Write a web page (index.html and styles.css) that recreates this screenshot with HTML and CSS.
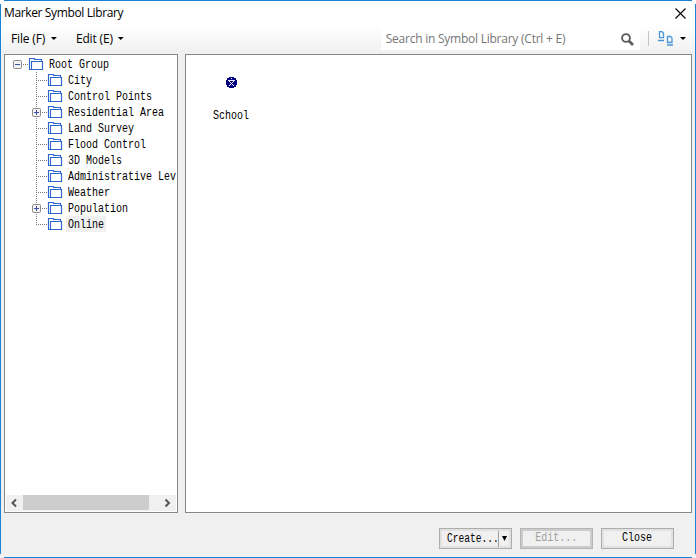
FILE: index.html
```html
<!DOCTYPE html>
<html lang="en">
<head>
<meta charset="utf-8">
<title>Marker Symbol Library</title>
<link rel="stylesheet" href="styles.css">
</head>
<body>
<svg width="0" height="0" class="defs">
  <defs>
    <g id="folder" fill="none" stroke="#2e66d0"><path d="M.5 13.5V2.5H5.500V3.500H12.500V5.500M2.500 13.500V5.500H13.500V13.500H0" stroke-width="1.150"/></g>
    <g id="box"><rect x=".5" y="4.5" width="8" height="8" rx="1" fill="#f2f2f2" stroke="#8c8c8c"/><path d="M2 8.500h5" stroke="#3c50a0"/></g>
    <g id="line"><path d="M36.500 0v16" stroke="#777" stroke-dasharray="1 1"/><path d="M38 8.500h9" stroke="#777" stroke-dasharray="1 1"/><use href="#folder" x="48"/></g>
    <g id="plus"><use href="#line"/><rect x="32" y="4" width="9" height="9" fill="#fff"/><use href="#box" x="32"/><path d="M36.500 6v5" stroke="#3c50a0"/></g>
  </defs>
</svg>
<div class="window">
  <header class="title"><span class="title-text">Marker Symbol Library</span>
    <svg width="11" height="11" viewBox="0 0 11 11"><path d="M.5.5l10 10M10.500.5l-10 10" stroke="#000" stroke-width="1.100"/></svg>
  </header>
  <nav class="toolbar">
    <span class="menu file">File (F)</span><i class="arrow"></i>
    <span class="menu edit">Edit (E)</span><i class="arrow"></i>
    <div class="search"><span>Search in Symbol Library (Ctrl + E)</span>
      <svg width="13" height="13" viewBox="0 0 13 13" fill="none" stroke="#5c5c5c"><circle cx="5" cy="5" r="3.900" stroke-width="1.900"/><path d="M8 8l4 4" stroke-width="2.600"/></svg>
    </div>
    <i class="divider"></i>
    <svg class="view" width="16" height="15" viewBox="0 0 16 15" fill="none" stroke="#4795d8" stroke-width="1.300"><path d="M1.500.7h2.500l1.500 1.500v4.500h-4zM0 9.500h6M9.500 5.500h3l1.500 1.500v4.500h-4.500zM9 14h6"/></svg>
    <i class="arrow"></i>
  </nav>
  <main class="panels">
    <section class="tree">
      <ul>
        <li><svg width="39" height="16" viewBox="5 0 39 16"><use href="#box" x="13"/><path d="M23 8.500h5" stroke="#777" stroke-dasharray="1 1"/><use href="#folder" x="29"/></svg><span><b>Root Group</b></span></li>
        <li><svg width="58" height="16" viewBox="5 0 58 16"><use href="#line"/></svg><span><b>City</b></span></li>
        <li><svg width="58" height="16" viewBox="5 0 58 16"><use href="#line"/></svg><span><b>Control Points</b></span></li>
        <li><svg width="58" height="16" viewBox="5 0 58 16"><use href="#plus"/></svg><span><b>Residential Area</b></span></li>
        <li><svg width="58" height="16" viewBox="5 0 58 16"><use href="#line"/></svg><span><b>Land Survey</b></span></li>
        <li><svg width="58" height="16" viewBox="5 0 58 16"><use href="#line"/></svg><span><b>Flood Control</b></span></li>
        <li><svg width="58" height="16" viewBox="5 0 58 16"><use href="#line"/></svg><span><b>3D Models</b></span></li>
        <li><svg width="58" height="16" viewBox="5 0 58 16"><use href="#line"/></svg><span><b>Administrative Lev</b></span></li>
        <li><svg width="58" height="16" viewBox="5 0 58 16"><use href="#line"/></svg><span><b>Weather</b></span></li>
        <li><svg width="58" height="16" viewBox="5 0 58 16"><use href="#plus"/></svg><span><b>Population</b></span></li>
        <li><svg width="58" height="16" viewBox="5 0 58 16"><path d="M36.500 0v9" stroke="#777" stroke-dasharray="1 1"/><path d="M38 8.500h9" stroke="#777" stroke-dasharray="1 1"/><use href="#folder" x="48"/></svg><span class="selected"><b>Online</b></span></li>
      </ul>
      <div class="scroll">
        <svg width="17" height="16" viewBox="0 0 17 16"><path d="M10 4.500L6.500 8 10 11.500" fill="none" stroke="#555" stroke-width="2"/></svg>
        <i class="thumb"></i>
        <svg width="17" height="16" viewBox="0 0 17 16"><path d="M6.500 4.500L10 8 6.500 11.500" fill="none" stroke="#555" stroke-width="2"/></svg>
      </div>
    </section>
    <section class="symbols">
      <figure>
        <svg width="11" height="11" viewBox="0 0 11 11"><path d="M3 0h5v1h2v2h1v5h-1v2H8v1H3v-1H1V8H0V3h1V1h2z" fill="#000080"/><path d="M2 3.500h7M3 4l5 5M8 4L3 9M3 8.500h1M7 8.500h1" stroke="#fff" stroke-width=".9"/><path d="M5 1h1v1H5z" fill="#fff"/></svg>
        <figcaption><b>School</b></figcaption>
      </figure>
    </section>
  </main>
  <footer>
    <button class="create"><span><b>Create...</b></span><i class="split"><i class="arrow"></i></i></button>
    <button class="disabled"><b>Edit...</b></button>
    <button><b>Close</b></button>
  </footer>
</div>
</body>
</html>
```

FILE: styles.css
```css
* { box-sizing: border-box; }
body { margin: 0; background: #fff; font: 12px "Open Sans", sans-serif; color: #000; overflow: hidden; }
.defs { position: absolute; }
svg { display: block; flex: none; }
.window {
  width: 696px; height: 558px; padding: 1px 4px;
  display: flex; flex-direction: column;
  background:
    linear-gradient(#1883d7, #1883d7) 4px 0 / 688px 1px no-repeat,
    linear-gradient(#1883d7, #1883d7) 4px 557px / 688px 1px no-repeat,
    linear-gradient(#1883d7, #1883d7) 0 4px / 1px 550px no-repeat,
    linear-gradient(#1883d7, #1883d7) 695px 4px / 1px 550px no-repeat,
    linear-gradient(#fff, #fff) 0 0 / 696px 25px no-repeat,
    linear-gradient(#fff, #f0f0f0) 0 25px / 696px 29px no-repeat,
    #f0f0f0;
}
.title { height: 24px; display: flex; justify-content: space-between; align-items: center; padding-right: 6px; }
.title-text { letter-spacing: -.37px; line-height: 24px; }
.toolbar { height: 29px; display: flex; align-items: center; padding: 0 6px 2px 7px; }
.menu { line-height: 24px; letter-spacing: -.15px; }
.file { width: 40px; }
.edit { width: 42px; margin-left: 19px; }
.arrow { width: 6px; height: 3px; background: #000; clip-path: polygon(0 0, 100% 0, 50% 100%); flex: none; }
.search {
  margin-left: 257px; width: 260px; height: 23px; padding: 0 6px 0 5px;
  display: flex; align-items: center; justify-content: space-between;
  background: #fff; color: #767676; white-space: nowrap;
}
.search span { letter-spacing: -.24px; }
.search svg { position: relative; top: 1px; }
.divider { width: 1px; height: 15px; margin: 0 9px 0 8px; background: #c5c5c5; }
.view { margin-right: 6px; }
.panels { height: 459px; display: flex; gap: 7px; }
.tree, .symbols { background: #fff; border: 1px solid #828790; }
.tree { width: 174px; padding: 1px 0; display: flex; flex-direction: column; justify-content: space-between; overflow: hidden; }
ul { list-style: none; margin: 0; padding: 0; }
li { height: 16px; display: flex; white-space: nowrap; }
li span { display: block; margin-left: 3px; padding-left: 1.500px; height: 16px; line-height: 16px; }
b { display: inline-block; font: 12px "Liberation Mono", monospace; line-height: 16px; transform: scaleX(.8333); transform-origin: 0 50%; }
.selected { width: 40px; background: #f0f0f0; }
.scroll { height: 16px; margin: 0 1px; display: flex; justify-content: space-between; background: #f0f0f0; }
.thumb { width: 126px; height: 15px; margin-right: 10px; background: #cdcdcd; }
.symbols { width: 507px; padding: 22px 27px; }
figure { margin: 0; width: 37px; }
figure svg { margin-left: 13px; }
figcaption { margin-top: 18px; height: 16px; }
footer { flex: 1; display: flex; justify-content: flex-end; gap: 8px; padding: 15px 18px 0 0; }
button {
  width: 73px; height: 21px; padding: 0; margin: 0; display: flex; align-items: center; justify-content: center;
  border: 1px solid #adadad; background: #f0f0f0; box-shadow: inset 0 0 0 2px #e1e1e1; color: #000;
}
button b { transform-origin: 50% 50%; line-height: 17px; }
.create { justify-content: flex-start; padding-left: 7px; }
.create > span { width: 51px; white-space: nowrap; }
.create b { transform-origin: 0 50%; transform: scaleX(.8); }
.split { height: 16px; width: 12px; border-left: 1px solid #a0a0a0; display: flex; align-items: center; justify-content: center; }
.split .arrow { width: 5px; height: 5px; }
.disabled { color: #a0a0a0; border-color: #b5b5b5; box-shadow: inset 0 0 0 2px #ccc; }
```
